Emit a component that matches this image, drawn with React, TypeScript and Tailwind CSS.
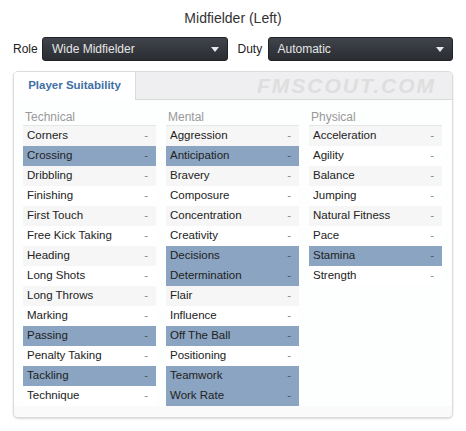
const technical: [string, boolean][] = [
  ["Corners", false],
  ["Crossing", true],
  ["Dribbling", false],
  ["Finishing", false],
  ["First Touch", false],
  ["Free Kick Taking", false],
  ["Heading", false],
  ["Long Shots", false],
  ["Long Throws", false],
  ["Marking", false],
  ["Passing", true],
  ["Penalty Taking", false],
  ["Tackling", true],
  ["Technique", false],
];

const mental: [string, boolean][] = [
  ["Aggression", false],
  ["Anticipation", true],
  ["Bravery", false],
  ["Composure", false],
  ["Concentration", false],
  ["Creativity", false],
  ["Decisions", true],
  ["Determination", true],
  ["Flair", false],
  ["Influence", false],
  ["Off The Ball", true],
  ["Positioning", false],
  ["Teamwork", true],
  ["Work Rate", true],
];

const physical: [string, boolean][] = [
  ["Acceleration", false],
  ["Agility", false],
  ["Balance", false],
  ["Jumping", false],
  ["Natural Fitness", false],
  ["Pace", false],
  ["Stamina", true],
  ["Strength", false],
];

function Select({ value }: { value: string }) {
  return (
    <div className="flex-1 h-[24px] rounded-[3px] bg-gradient-to-b from-[#40444b] to-[#2a2d32] border border-[#1f2226] flex items-center justify-between pl-[9px] pr-[8px] text-[12px] text-[#e6e6e6]">
      <span>{value}</span>
      <svg width="8" height="5" viewBox="0 0 8 5">
        <path d="M0 0h8L4 5z" fill="#e8e8e8" />
      </svg>
    </div>
  );
}

function Column({ title, rows }: { title: string; rows: [string, boolean][] }) {
  return (
    <div className="w-[133px]">
      <div className="h-[18px] border-b border-[#e6e6e6] pl-[2px] text-[12px] leading-[18px] text-[#999]">
        {title}
      </div>
      {rows.map(([name, hi], i) => (
        <div
          key={name}
          className={
            "h-[20px] flex items-center justify-between pl-[4px] pr-[8px] text-[11.5px] text-[#222] " +
            (hi ? "bg-[#8aa4c1]" : i % 2 === 0 ? "bg-[#f6f6f6]" : "bg-white")
          }
        >
          <span>{name}</span>
          <span className={hi ? "text-[#555]" : "text-[#888]"}>-</span>
        </div>
      ))}
    </div>
  );
}

export default function App() {
  return (
    <div
      className="w-[466px] h-[431px] bg-white"
      style={{ fontFamily: '"Liberation Sans", Arial, sans-serif' }}
    >
      <div className="pt-[10px] text-center text-[14px] leading-[16px] text-[#333]">
        Midfielder (Left)
      </div>

      <div className="flex items-center mt-[11px] pl-[13px] pr-[13px] text-[12px] text-[#222]">
        <span className="w-[29px]">Role</span>
        <Select value="Wide Midfielder" />
        <span className="ml-[10px] w-[30px]">Duty</span>
        <Select value="Automatic" />
      </div>

      <div className="mx-[13px] mt-[10px] h-[347px] rounded-[5px] border border-[#dcdcdc] shadow-[0_1px_2px_rgba(0,0,0,0.15)] overflow-hidden flex flex-col bg-[#fdfefe]">
        <div className="h-[28px] flex bg-[#efeff1] border-b border-[#dadada]">
          <div className="w-[122px] bg-white border-r border-[#dadada] h-[28px] flex items-center justify-center text-[11.5px] font-bold text-[#3f6fa6]">
            Player Suitability
          </div>
          <div className="flex-1 flex items-center justify-end pr-[16px]">
            <span className="text-[21px] font-black italic tracking-[2px] text-[#dedede]">
              FMSCOUT.COM
            </span>
          </div>
        </div>
        <div className="flex gap-[10px] pl-[9px] pt-[8px]">
          <Column title="Technical" rows={technical} />
          <Column title="Mental" rows={mental} />
          <Column title="Physical" rows={physical} />
        </div>
        <div className="flex-1" />
        <div className="h-[12px] bg-[#fafafa]" />
      </div>
    </div>
  );
}
